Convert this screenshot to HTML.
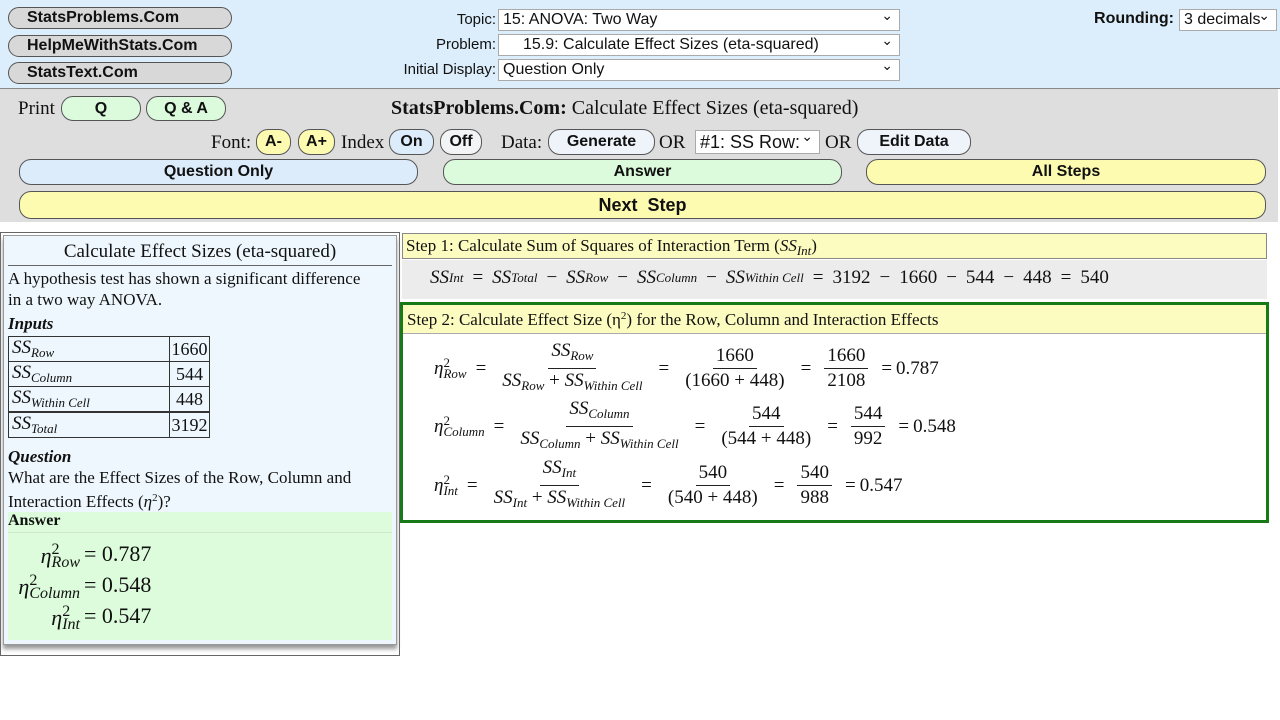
<!DOCTYPE html>
<html><head><meta charset="utf-8"><style>
*{box-sizing:border-box;margin:0;padding:0}
body{width:1280px;height:720px;overflow:hidden;background:#fff;font-family:"Liberation Serif",serif;position:relative;color:#111}
.a{position:absolute}
.btn{position:absolute;border:1px solid #555;border-radius:12px;font-family:"Liberation Sans",sans-serif;font-weight:bold;font-size:16px;text-align:center;display:flex;align-items:center;justify-content:center}
.sel{position:absolute;background:#fff;border:1px solid #aaa;font-family:"Liberation Sans",sans-serif;font-size:16px;padding-left:4px;display:flex;align-items:center}
.sel:after{content:"⌄";position:absolute;right:6px;top:-3px;font-size:14px}
.lbl{position:absolute;font-family:"Liberation Sans",sans-serif;font-size:15px;text-align:right}
i{font-style:italic}
sub{font-size:13px;font-style:italic;vertical-align:-4px}
sup{font-size:11px;vertical-align:6px}
.eq{position:absolute;font-size:19px;display:flex;align-items:center;white-space:nowrap}
.fr{display:inline-flex;flex-direction:column;align-items:center;margin:0 4px}
.fr>span{padding:0 3px;line-height:24px}
.fr>span:first-child{border-bottom:1px solid #222}
.op{margin:0 9px}
.ss{display:inline-flex;flex-direction:column;align-items:flex-start;font-size:13px;line-height:11px;vertical-align:7px;margin-left:0}
.ss b{font-weight:normal;font-style:normal;display:block}
.ss i{font-style:italic;display:block}
.ss2{line-height:13px;font-size:16px;vertical-align:9px}
</style></head><body>
<div class="a" style="left:0;top:0;width:1280px;height:89px;background:#dceefb;border-bottom:1px solid #888"></div>
<div class="a" style="left:0;top:89px;width:1278px;height:133px;background:#dedede"></div>

<div class="btn" style="left:8px;top:7px;width:224px;height:22px;background:#d8d8d8;justify-content:flex-start;padding-left:18px">StatsProblems.Com</div>
<div class="btn" style="left:8px;top:35px;width:224px;height:22px;background:#d8d8d8;justify-content:flex-start;padding-left:18px">HelpMeWithStats.Com</div>
<div class="btn" style="left:8px;top:62px;width:224px;height:22px;background:#d8d8d8;justify-content:flex-start;padding-left:18px">StatsText.Com</div>

<div class="lbl" style="left:380px;top:11px;width:116px">Topic:</div>
<div class="lbl" style="left:380px;top:36px;width:116px">Problem:</div>
<div class="lbl" style="left:380px;top:61px;width:116px">Initial Display:</div>
<div class="sel" style="left:498px;top:9px;width:402px;height:22px">15: ANOVA: Two Way</div>
<div class="sel" style="left:498px;top:34px;width:402px;height:22px;padding-left:24px">15.9: Calculate Effect Sizes (eta-squared)</div>
<div class="sel" style="left:498px;top:59px;width:402px;height:22px">Question Only</div>
<div class="lbl" style="left:1080px;top:10px;width:94px;font-weight:bold;font-size:16px">Rounding:</div>
<div class="sel" style="left:1179px;top:9px;width:98px;height:22px">3 decimals</div>

<div class="a" style="left:18px;top:98px;font-size:19px">Print</div>
<div class="btn" style="left:61px;top:96px;width:80px;height:25px;background:#dcfadc">Q</div>
<div class="btn" style="left:146px;top:96px;width:80px;height:25px;background:#dcfadc">Q &amp; A</div>
<div class="a" style="left:391px;top:97px;font-size:20px"><b>StatsProblems.Com:</b> Calculate Effect Sizes (eta-squared)</div>

<div class="a" style="left:211px;top:132px;font-size:19px">Font:</div>
<div class="btn" style="left:256px;top:129px;width:35px;height:26px;background:#fdfbb0">A-</div>
<div class="btn" style="left:298px;top:129px;width:37px;height:26px;background:#fdfbb0">A+</div>
<div class="a" style="left:341px;top:132px;font-size:19px">Index</div>
<div class="btn" style="left:389px;top:129px;width:45px;height:26px;background:#dcecfa">On</div>
<div class="btn" style="left:440px;top:129px;width:42px;height:26px;background:#f2f4f6">Off</div>
<div class="a" style="left:501px;top:132px;font-size:19px">Data:</div>
<div class="btn" style="left:548px;top:129px;width:107px;height:26px;background:#eef4fa">Generate</div>
<div class="a" style="left:659px;top:132px;font-size:19px">OR</div>
<div class="sel" style="left:695px;top:130px;width:125px;height:24px;font-size:18px">#1: SS Row:</div>
<div class="a" style="left:825px;top:132px;font-size:19px">OR</div>
<div class="btn" style="left:857px;top:129px;width:114px;height:26px;background:#eef4fa">Edit Data</div>

<div class="btn" style="left:19px;top:159px;width:399px;height:26px;background:#dcecfa">Question Only</div>
<div class="btn" style="left:443px;top:159px;width:399px;height:26px;background:#dcfadc">Answer</div>
<div class="btn" style="left:866px;top:159px;width:400px;height:26px;background:#fdfbb0">All Steps</div>
<div class="btn" style="left:19px;top:191px;width:1247px;height:28px;background:#fdfbb0;font-size:18px">Next&nbsp; Step</div>

<!-- left panel -->
<div class="a" style="left:0;top:232px;width:400px;height:424px;border:1px solid #666"></div>
<div class="a" style="left:3px;top:235px;width:394px;height:410px;background:#eef7fd;border:1px solid #999;box-shadow:0 4px 4px #999"></div>
<div class="a" style="left:8px;top:241px;width:384px;text-align:center;font-size:19px;border-bottom:1px solid #666;padding-bottom:2px">Calculate Effect Sizes (eta-squared)</div>
<div class="a" style="left:8px;top:268px;width:362px;font-size:17px;line-height:21px">A hypothesis test has shown a significant difference in a two way ANOVA.</div>
<div class="a" style="left:8px;top:314px;font-size:17px;font-weight:bold;font-style:italic">Inputs</div>
<table class="a" style="left:8px;top:336px;border-collapse:collapse;font-size:19px">
<tr><td style="border:1px solid #333;width:161px;height:25px;padding-left:3px"><i>SS</i><sub>Row</sub></td><td style="border:1px solid #333;width:40px;text-align:center;font-size:18px">1660</td></tr>
<tr><td style="border:1px solid #333;height:25px;padding-left:3px"><i>SS</i><sub>Column</sub></td><td style="border:1px solid #333;text-align:center;font-size:18px">544</td></tr>
<tr><td style="border:1px solid #333;height:25px;padding-left:3px"><i>SS</i><sub>Within Cell</sub></td><td style="border:1px solid #333;text-align:center;font-size:18px">448</td></tr>
<tr><td style="border:1px solid #333;border-top:2px solid #333;height:25px;padding-left:3px"><i>SS</i><sub>Total</sub></td><td style="border:1px solid #333;border-top:2px solid #333;text-align:center;font-size:18px">3192</td></tr>
</table>
<div class="a" style="left:8px;top:447px;font-size:17px;font-weight:bold;font-style:italic">Question</div>
<div class="a" style="left:8px;top:467px;width:385px;font-size:17px;line-height:21px">What are the Effect Sizes of the Row, Column and Interaction Effects (<i>η</i><sup>2</sup>)?</div>
<div class="a" style="left:8px;top:512px;width:384px;height:128px;background:#dcfcdc"></div>
<div class="a" style="left:8px;top:512px;width:384px;font-size:16px;font-weight:bold;border-bottom:1px solid #cfe8cf;padding-bottom:2px">Answer</div>
<div class="a" style="left:4px;top:540px;width:76px;text-align:right;font-size:22px;line-height:31px"><i>η</i><span class="ss ss2"><b>2</b><i>Row</i></span></div>
<div class="a" style="left:4px;top:571px;width:76px;text-align:right;font-size:22px;line-height:31px"><i>η</i><span class="ss ss2"><b>2</b><i>Column</i></span></div>
<div class="a" style="left:4px;top:602px;width:76px;text-align:right;font-size:22px;line-height:31px"><i>η</i><span class="ss ss2"><b>2</b><i>Int</i></span></div>
<div class="a" style="left:84px;top:538px;font-size:22px;line-height:31px">= 0.787<br>= 0.548<br>= 0.547</div>

<!-- step 1 -->
<div class="a" style="left:402px;top:233px;width:865px;height:26px;background:#fdfcc0;border:1px solid #888;font-size:17px;padding:2px 3px">Step 1: Calculate Sum of Squares of Interaction Term (<i>SS</i><sub>Int</sub>)</div>
<div class="a" style="left:402px;top:260px;width:865px;height:39px;background:#ececec"></div>
<div class="eq" style="left:430px;top:267px"><i>SS</i><sub>Int</sub><span class="op">=</span><i>SS</i><sub>Total</sub><span class="op">−</span><i>SS</i><sub>Row</sub><span class="op">−</span><i>SS</i><sub>Column</sub><span class="op">−</span><i>SS</i><sub>Within Cell</sub><span class="op">=</span>3192<span class="op">−</span>1660<span class="op">−</span>544<span class="op">−</span>448<span class="op">=</span>540</div>

<!-- step 2 -->
<div class="a" style="left:400px;top:302px;width:869px;height:221px;border:3px solid #167a16"></div>
<div class="a" style="left:403px;top:305px;width:863px;height:29px;background:#fdfcc0;border-bottom:1px solid #aaa;font-size:17px;padding:5px 4px">Step 2: Calculate Effect Size (η<sup>2</sup>) for the Row, Column and Interaction Effects</div>

<div class="eq" style="left:434px;top:339px"><span><i>η</i><span class="ss"><b>2</b><i>Row</i></span></span><span class="op">=</span><span class="fr"><span><i>SS</i><sub>Row</sub></span><span><i>SS</i><sub>Row</sub> + <i>SS</i><sub>Within Cell</sub></span></span><span class="op">=</span><span class="fr"><span>1660</span><span>(1660 + 448)</span></span><span class="op">=</span><span class="fr"><span>1660</span><span>2108</span></span><span class="op" style="margin-right:4px">=</span>0.787</div>

<div class="eq" style="left:434px;top:397px"><span><i>η</i><span class="ss"><b>2</b><i>Column</i></span></span><span class="op">=</span><span class="fr"><span><i>SS</i><sub>Column</sub></span><span><i>SS</i><sub>Column</sub> + <i>SS</i><sub>Within Cell</sub></span></span><span class="op">=</span><span class="fr"><span>544</span><span>(544 + 448)</span></span><span class="op">=</span><span class="fr"><span>544</span><span>992</span></span><span class="op" style="margin-right:4px">=</span>0.548</div>

<div class="eq" style="left:434px;top:456px"><span><i>η</i><span class="ss"><b>2</b><i>Int</i></span></span><span class="op">=</span><span class="fr"><span><i>SS</i><sub>Int</sub></span><span><i>SS</i><sub>Int</sub> + <i>SS</i><sub>Within Cell</sub></span></span><span class="op">=</span><span class="fr"><span>540</span><span>(540 + 448)</span></span><span class="op">=</span><span class="fr"><span>540</span><span>988</span></span><span class="op" style="margin-right:4px">=</span>0.547</div>
</body></html>
